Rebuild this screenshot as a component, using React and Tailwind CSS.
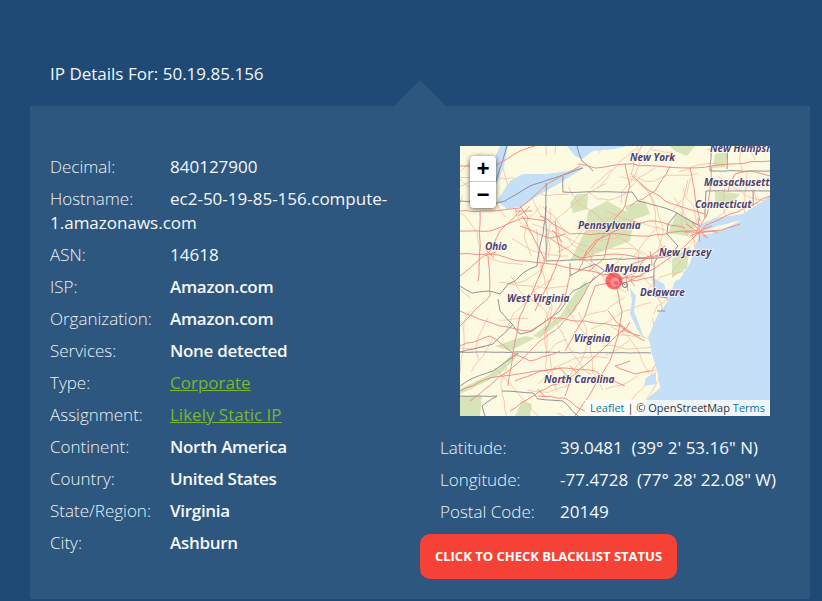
import React from 'react';

const font = { fontFamily: '"Open Sans", sans-serif' };

const leftRows = [
    ['Decimal:', '840127900'],
    ['Hostname:', 'ec2-50-19-85-156.compute-1.amazonaws.com'],
    ['ASN:', '14618'],
    ['ISP:', 'Amazon.com'],
    ['Organization:', 'Amazon.com'],
    ['Services:', 'None detected'],
    ['Type:', 'Corporate', true],
    ['Assignment:', 'Likely Static IP', true],
    ['Continent:', 'North America'],
    ['Country:', 'United States'],
    ['State/Region:', 'Virginia'],
    ['City:', 'Ashburn'],
];

const rightRows = [
    ['Latitude:', '39.0481\u00a0\u00a0(39° 2\' 53.16" N)'],
    ['Longitude:', '-77.4728\u00a0\u00a0(77° 28\' 22.08" W)'],
    ['Postal Code:', '20149'],
];

// small seeded generator so the map comes out the same every time
let seed = 7;
function rnd() {
    seed = (seed * 16807) % 2147483647;
    return seed / 2147483647;
}

// break a polyline into short wobbly pieces, roads are never straight
function wobble(points, amount) {
    let d = '';
    points.forEach((p, i) => {
        if (i === 0) {
            d += `M${p[0]} ${p[1]}`;
            return;
        }
        const prev = points[i - 1];
        const len = Math.hypot(p[0] - prev[0], p[1] - prev[1]);
        const steps = Math.max(1, Math.round(len / 7));
        for (let s = 1; s <= steps; s++) {
            const t = s / steps;
            const edge = s === steps ? 0 : amount;
            const x = prev[0] + (p[0] - prev[0]) * t + (rnd() - 0.5) * edge;
            const y = prev[1] + (p[1] - prev[1]) * t + (rnd() - 0.5) * edge;
            d += `L${x.toFixed(1)} ${y.toFixed(1)}`;
        }
    });
    return d;
}

function parse(d) {
    return d
        .slice(1)
        .split('L')
        .map((pair) => pair.split(' ').map(Number));
}

const mainRoads = [
    'M118 18L135 22L165 18L195 20L230 22L252 20L270 18L310 15',
    'M310 50L290 60L270 68L245 80L235 90L225 100L210 112L195 122L175 132L160 138',
    'M80 70L110 88L150 88L190 90L225 85L238 84',
    'M60 80L90 92L120 112L155 108L185 112L210 110',
    'M0 65L30 65L60 62L85 40L120 20',
    'M60 65L40 85L30 105L0 130',
    'M20 65L20 95L18 135',
    'M0 108L30 108L60 115L90 118L130 125L155 130',
    'M62 70L75 95L85 115L75 140L60 170L55 195L48 240',
    'M95 75L100 110L90 135L75 165',
    'M135 130L120 155L100 180L80 195L60 215L35 235L10 255',
    'M0 165L40 180L70 185L90 172L125 175L160 180L185 195',
    'M155 135L162 165L158 190L150 215L132 245L115 270',
    'M165 182L130 215L110 232L80 245L50 265',
    'M0 245L30 232L80 225L100 222L135 225L165 240',
    'M230 22L235 50L240 75',
    'M165 18L170 40L165 60L150 80L125 110L118 125',
    'M252 20L250 45L248 65L240 82',
    'M210 20L195 45L170 60',
    'M172 30L190 45L205 55L225 62L245 68',
    'M150 88L145 110L130 125',
    'M0 20L30 22L60 5L75 0',
    'M0 85L30 85L62 72L85 75',
    'M120 115L135 95L170 78L195 75L225 82',
    'M85 185L105 150L110 130',
    'M105 205L125 170L135 140L155 135',
    'M55 235L80 225L100 222L110 235L105 250',
    'M268 45L275 28L290 25L310 30',
    'M205 100L185 112L170 135L195 130',
    'M28 110L30 150L10 170L0 180',
    'M0 200L30 190L50 205L70 215L100 205',
    'M78 250L105 252L130 270',
    'M170 215L155 220L175 228L190 225',
    'M148 165L165 185L180 190',
];

const urban = [
    'M226 78L248 92', 'M230 90L252 80', 'M238 72L240 96', 'M224 86L258 86', 'M232 76L246 90', 'M242 86L262 84L280 78',
    'M160 125L175 140', 'M165 122L168 145', 'M158 132L182 130', 'M152 138L172 128', 'M182 112L202 108', 'M190 105L192 120',
    'M170 118L188 112', 'M60 60L68 72', 'M55 65L72 65', 'M58 70L70 60', 'M92 84L102 96', 'M90 92L105 88', 'M26 104L34 112',
    'M25 110L36 106', 'M160 178L170 186', 'M162 186L170 176', 'M110 220L118 228', 'M78 243L86 251',
];

const borders = [
    'M86 37L86 115L197 112',
    'M103 30L103 46L155 46',
    'M197 112L210 110L218 100L207 88L208 78L217 67L240 80',
    'M155 46L172 46L178 55L205 62L217 67',
    'M197 112L194 118L194 150L208 152',
    'M197 165L205 165',
    'M110 117L110 130L125 122L135 118L145 125L155 130L165 139',
    'M86 60L83 88L80 100L77 120L63 127L55 135L48 138L40 148L28 145L12 147L0 140',
    'M38 153L40 165L52 178L60 188L72 185L90 172L100 165L113 145L132 135L148 122',
    'M53 178L33 198L0 206',
    'M0 206L191 207',
    'M0 240L13 232L33 225L58 207',
    'M0 250L37 250L22 260L25 270',
    'M42 245L73 247L78 253L103 255L118 270',
    'M252 0L250 25L310 25',
    'M267 0L267 23',
    'M246 45L310 45',
    'M246 45L245 72',
    'M293 45L293 60',
    'M123 22L100 30L70 40L45 55L37 57L0 55',
    'M47 0L40 22L36 35',
    'M117 0L122 15L133 25',
];

const forests = [
    'M110 57L117 48L128 48L127 63L113 67Z',
    'M128 65L147 55L165 65L175 70L170 95L125 112L110 115L125 85Z',
    'M210 0L235 0L227 10L215 5Z',
    'M255 8L268 6L265 21L253 22Z',
    'M217 67L237 78L227 90L208 87Z',
    'M212 113L230 100L227 122L212 132Z',
    'M0 243L27 230L40 220L53 207L60 207L40 228L13 242L0 248Z',
    'M0 250L22 250L20 270L0 270Z',
    'M73 190L88 178L100 170L113 150L125 135L128 140L115 165L95 180L80 192Z',
    'M35 200L65 190L75 192L50 205Z',
    'M165 60L185 55L190 68L170 75Z',
    'M255 45L280 48L270 60L255 60Z',
    'M55 270L62 255L72 258L70 270Z',
];

const labels = [
    ['New York', 170, 15],
    ['New Hampshire', 250, 6],
    ['Massachusetts', 244, 40],
    ['Connecticut', 235, 62],
    ['Pennsylvania', 118, 83],
    ['New Jersey', 199, 110],
    ['Ohio', 25, 104],
    ['Maryland', 145, 126],
    ['West Virginia', 47, 156],
    ['Delaware', 180, 150],
    ['Virginia', 114, 196],
    ['North Carolina', 84, 237],
];

// thin local roads, the water is painted over them afterwards
const minorPaths = Array.from({ length: 130 }, () => {
    let x = rnd() * 310;
    let y = rnd() * 270;
    let angle = rnd() * Math.PI * 2;
    const points = [[x, y]];
    const hops = 2 + Math.floor(rnd() * 4);
    for (let i = 0; i < hops; i++) {
        angle += (rnd() - 0.5) * 1.2;
        const hop = 8 + rnd() * 16;
        x += Math.cos(angle) * hop;
        y += Math.sin(angle) * hop;
        points.push([+x.toFixed(1), +y.toFixed(1)]);
    }
    return wobble(points, 1.4);
});

const mainPaths = mainRoads.concat(urban).map((d) => wobble(parse(d), 1.6));
const borderPaths = borders.map((d) => wobble(parse(d), 0.8));

function MapTiles() {
    return (
        <svg viewBox="0 0 310 270" className="block w-full h-full">
            <defs>
                <filter id="soft">
                    <feGaussianBlur stdDeviation="0.3" />
                </filter>
            </defs>
            <g filter="url(#soft)">
                <rect width="310" height="270" fill="#fcfae0" />
                {forests.map((d) => (
                    <path key={d} d={d} fill="#d6e4b8" />
                ))}
                {minorPaths.map((d, i) => (
                    <path key={i} d={d} fill="none" stroke="#f4bda6" strokeWidth="0.8" strokeLinejoin="round" />
                ))}
                {/* ocean */}
                <path
                    d="M310 50L298 58L283 68L255 72L242 78L240 88L235 100L230 117L220 133L215 135L208 155L198 168L188 192L190 198L192 208L198 228L200 242L188 252L180 270L310 270Z"
                    fill="#c5dff6"
                />
                <path d="M238 87L258 80L282 74L262 84L242 90Z" fill="#fcfae0" />
                {/* bays */}
                <path d="M170 142L176 150L174 165L184 192L178 185L170 168L172 155Z" fill="#c5dff6" />
                <path d="M190 130L204 138L208 152L198 146Z" fill="#c5dff6" />
                <path d="M186 232L196 226L196 238L184 240Z" fill="#c5dff6" />
                {/* lakes */}
                <path d="M123 20L110 25L87 28L63 28L50 35L37 55L47 63L63 60L77 50L100 37L122 23Z" fill="#c5dff6" />
                <path d="M40 0L48 0L44 20L37 38L30 30L34 14Z" fill="#c5dff6" />
                <path d="M107 0L115 10L122 13L133 5L155 3L167 0Z" fill="#c5dff6" />
                {borderPaths.map((d, i) => (
                    <path key={i} d={d} fill="none" stroke="#8a8492" strokeWidth="0.9" strokeLinejoin="round" />
                ))}
                {mainPaths.map((d, i) => (
                    <path key={i} d={d} fill="none" stroke="#f0857d" strokeWidth="0.9" strokeLinejoin="round" />
                ))}
            </g>
            <g
                fontFamily='"Open Sans", sans-serif'
                fontSize="10"
                fontWeight="700"
                fontStyle="italic"
                fill="#4f3f6d"
                stroke="#ffffff"
                strokeOpacity="0.7"
                strokeWidth="1.6"
                paintOrder="stroke"
            >
                {labels.map(([name, x, y]) => (
                    <text key={name} x={x} y={y}>
                        {name}
                    </text>
                ))}
            </g>
            {/* ip marker and the DC ring beside it */}
            <circle cx="165" cy="139" r="2.5" fill="none" stroke="#77727f" strokeWidth="1" />
            <circle cx="154" cy="135" r="8.5" fill="#ff2f38" fillOpacity="0.72" />
            <circle cx="155" cy="136" r="4.5" fill="#f8a3a8" fillOpacity="0.75" />
            <circle cx="156" cy="137" r="2" fill="#e2555e" fillOpacity="0.8" />
        </svg>
    );
}

function LeafletMap() {
    return (
        <div className="relative ml-10 w-[310px] h-[270px] overflow-hidden">
            <MapTiles />
            <div className="absolute left-[10px] top-[10px] w-[26px] rounded bg-white shadow-[0_1px_5px_rgba(0,0,0,0.65)]">
                <div
                    className="h-[26px] border-b border-[#ccc] text-center text-[22px] font-bold leading-[29px] text-black"
                    style={{ fontFamily: '"Liberation Mono", monospace' }}
                >
                    +
                </div>
                <div
                    className="h-[26px] text-center text-[22px] font-bold leading-[29px] text-black"
                    style={{ fontFamily: '"Liberation Mono", monospace' }}
                >
                    −
                </div>
            </div>
            <div className="absolute right-0 bottom-0 h-4 bg-white/70 px-[5px] text-[11px] leading-4 text-[#333]">
                <a className="text-[#0078a8]">Leaflet</a> | © OpenStreetMap <a className="text-[#0078a8]">Terms</a>
            </div>
        </div>
    );
}

function Row({ label, value, link }) {
    const numeric = /\d/.test(value);
    return (
        <div className="mb-2 text-[17px] leading-6">
            <span className="inline-block w-[120px] font-light text-[#eef2f6]">{label}</span>
            {link ? (
                <a className="text-[#7ab62f] underline">{value}</a>
            ) : numeric ? (
                <span className="font-medium text-[#f5f7f9]">{value}</span>
            ) : (
                <span className="font-semibold tracking-[-0.3px] text-[#f5f7f9]">{value}</span>
            )}
        </div>
    );
}

export default function App() {
    return (
        <div className="h-[601px] overflow-hidden bg-[#1f4a75] pt-[62px]" style={font}>
            <h1 className="mb-5 pl-[50px] text-[17px] font-medium leading-6 text-[#f2f5f8]">IP Details For: 50.19.85.156</h1>
            <div className="relative ml-[30px] flex h-[493px] w-[780px] bg-[#2d577f] px-5 pt-10">
                <div className="absolute left-[364px] top-[-26px] h-0 w-0 border-x-[26px] border-b-[26px] border-x-transparent border-b-[#2d577f]" />
                <div className="w-[370px] pr-[30px] pt-[9px]">
                    {leftRows.map(([label, value, link]) => (
                        <Row key={label} label={label} value={value} link={link} />
                    ))}
                </div>
                <div className="flex-1">
                    <LeafletMap />
                    <div className="mt-5 ml-5">
                        {rightRows.map(([label, value]) => (
                            <Row key={label} label={label} value={value} />
                        ))}
                    </div>
                    <button className="mt-[2px] h-[45px] w-[257px] rounded-[10px] bg-[#f64236] text-[13px] font-bold uppercase text-white">
                        Click to check blacklist status
                    </button>
                </div>
            </div>
        </div>
    );
}
